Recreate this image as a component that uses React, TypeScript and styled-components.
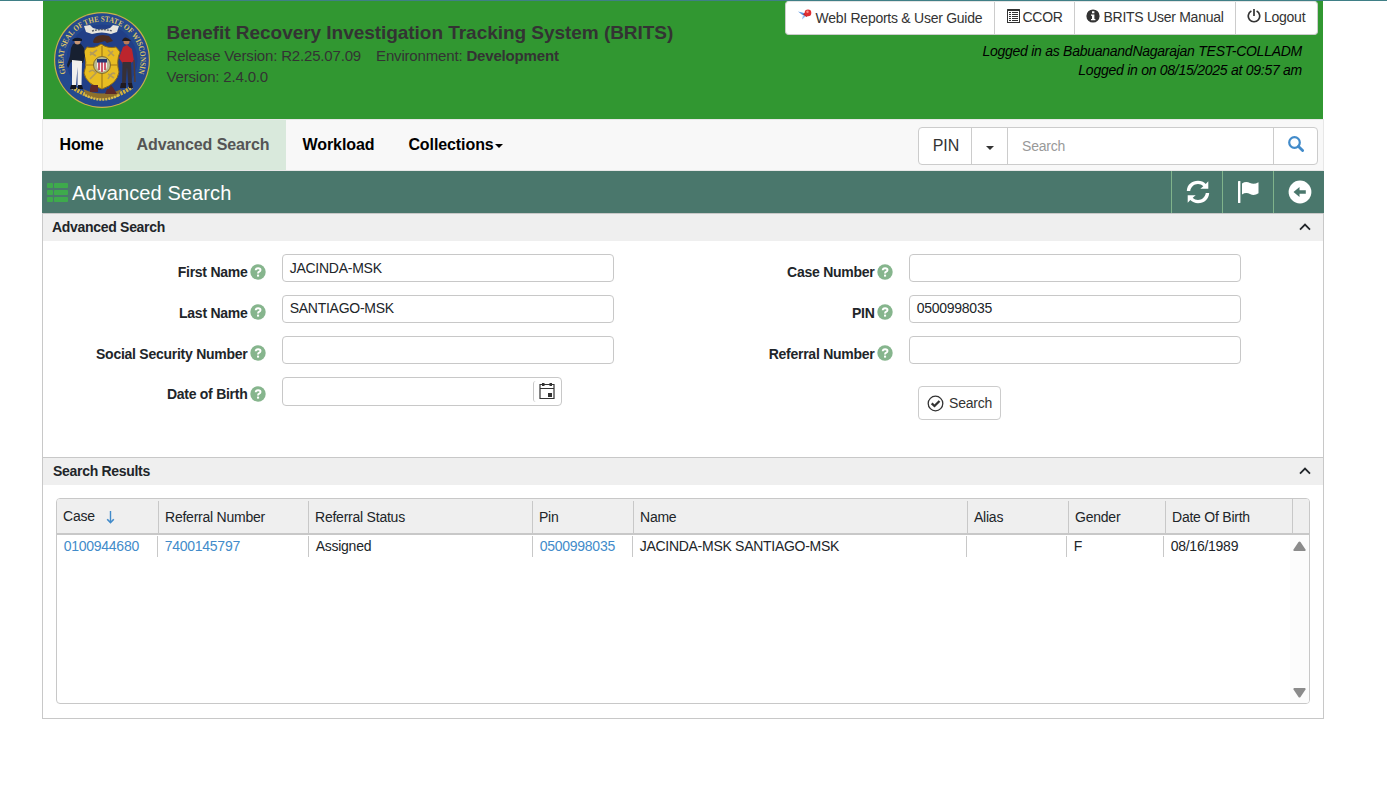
import React from 'react';
import styled, { createGlobalStyle } from 'styled-components';

const GlobalStyle = createGlobalStyle`
  * { box-sizing: border-box; }
  body {
    margin: 0;
    background: #fff;
    color: #212529;
    font-family: "Liberation Sans", Arial, sans-serif;
    font-size: 14px;
    line-height: 20px;
    letter-spacing: -0.26px;
  }
  svg { display: block; flex: none; }
`;

const Page = styled.div`
  height: 787px;
  border-top: 1px solid #3f7f86;
  overflow: hidden;
`;
const Container = styled.div`
  width: 1282px;
  margin-left: 42px;
`;
const Header = styled.header`
  display: flex;
  height: 118px;
  margin: 0 1px;
  background: #319731;
  color: #333;
`;
const SealBox = styled.div`
  padding: 10px 0 0 10px;
`;
const HeaderInfo = styled.div`
  padding: 20px 0 0 15.5px;
  font-size: 15px;
  line-height: 21px;
  letter-spacing: -0.17px;
  white-space: nowrap;
`;
const AppTitle = styled.h1`
  margin: 0;
  font-size: 19px;
  line-height: 24px;
  font-weight: bold;
  letter-spacing: -0.04px;
`;
const Version = styled.div`
  display: flex;
  gap: 15px;
`;
const HeaderSide = styled.div`
  display: flex;
  flex-direction: column;
  align-items: flex-end;
  margin-left: auto;
  padding-right: 5px;
`;
const LinkGroup = styled.nav`
  display: flex;
  height: 34px;
  background: #fff;
  border: 1px solid #ccc;
  border-top-color: #e4e4e4;
  border-radius: 4px;
  overflow: hidden;
`;
const TopLink = styled.a<{ $w: number; $gap?: number; $drop?: number; $pad?: number }>`
  display: flex;
  align-items: flex-start;
  width: ${p => p.$w}px;
  gap: ${p => p.$gap ?? 3}px;
  padding: ${p => 5 + (p.$drop ?? 0)}px 0 0 ${p => p.$pad ?? 12}px;
  white-space: nowrap;
  color: #333;
  & + & { border-left: 1px solid #ccc; }
  svg { margin-top: ${p => 2 - (p.$drop ?? 0)}px; }
`;
const LoginInfo = styled.div`
  padding: 7px 16px 0 0;
  color: #000;
  font-style: italic;
  line-height: 19px;
  text-align: right;
`;
const NavBar = styled.div`
  display: flex;
  height: 52px;
  background: #f8f8f8;
  border: 1px solid #e7e7e7;
`;
const NavItem = styled.a<{ $active?: boolean; $w: number }>`
  display: flex;
  justify-content: center;
  align-items: center;
  gap: 1px;
  width: ${p => p.$w}px;
  padding: 0 0 1px;
  font-size: 16px;
  font-weight: bold;
  letter-spacing: -0.09px;
  color: ${p => (p.$active ? '#555' : '#000')};
  background: ${p => (p.$active ? '#d9e9dc' : 'transparent')};
`;
const Caret = styled.span`
  margin-top: 3px;
  border: 4px solid transparent;
  border-top-color: currentColor;
  border-bottom: 0;
`;
const SearchGroup = styled.div`
  display: flex;
  width: 400px;
  height: 38px;
  margin: 7px 5px 0 auto;
  background: #fff;
  border: 1px solid #ccc;
  border-radius: 4px;
`;
const SearchCell = styled.div<{ $w: number }>`
  display: flex;
  align-items: center;
  justify-content: center;
  width: ${p => p.$w}px;
  border-right: 1px solid #ccc;
  font-size: 16px;
  letter-spacing: 0;
  color: #333;
  &:first-child { padding-left: 2px; }
  &:last-child { border-right: 0; padding-bottom: 5px; }
`;
const SearchInput = styled(SearchCell)`
  justify-content: flex-start;
  padding-left: 14px;
  font-size: 14px;
  letter-spacing: -0.2px;
  color: #999;
`;
const TitleBar = styled.div`
  display: flex;
  align-items: center;
  height: 42px;
  padding-left: 5px;
  background: #4a776c;
  color: #fff;
`;
const PageTitle = styled.h2`
  margin: 0 auto 0 4px;
  padding-top: 1px;
  font-size: 20px;
  line-height: 24px;
  letter-spacing: 0.1px;
  font-weight: normal;
`;
const ToolButton = styled.button`
  display: flex;
  align-items: center;
  justify-content: center;
  width: 51px;
  height: 42px;
  padding: 0 0 1px 1px;
  border: 0;
  border-left: 1px solid #80b38b;
  background: transparent;
  color: #fff;
`;
const Panel = styled.section<{ $h: number; $last?: boolean }>`
  height: ${p => p.$h}px;
  border: 1px solid #c8c8c8;
  border-bottom-width: ${p => (p.$last ? 1 : 0)}px;
`;
const PanelHeader = styled.div<{ $pad: number }>`
  display: flex;
  align-items: center;
  justify-content: space-between;
  height: 27px;
  padding: 0 12px 1px ${p => p.$pad}px;
  background: #efefef;
  color: #212529;
  font-weight: bold;
  letter-spacing: -0.3px;
`;
const FormGrid = styled.div`
  display: grid;
  grid-template-columns: 223px 348px 279px 348px;
  grid-auto-rows: 41px;
  padding-top: 13px;
`;
const Label = styled.label<{ $up?: number; $iconUp?: number }>`
  display: flex;
  justify-content: flex-end;
  align-items: center;
  gap: 2px;
  height: 20px;
  margin: ${p => 8 - (p.$up ?? 0)}px 0.5px 0 0;
  font-weight: bold;
  letter-spacing: -0.26px;
  white-space: nowrap;
  svg { margin-bottom: ${p => (p.$iconUp ?? 0) * 2}px; }
`;
const FieldCell = styled.div`
  padding-left: 16px;
`;
const Field = styled.div<{ $w?: number; $h?: number; $up?: number }>`
  display: flex;
  width: ${p => p.$w ?? 332}px;
  height: ${p => p.$h ?? 28}px;
  padding: ${p => 3 - (p.$up ?? 0)}px 0 0 6.7px;
  border: 1px solid #c8c8c8;
  border-radius: 4px;
`;
const PickerButton = styled.span`
  display: flex;
  align-items: center;
  justify-content: center;
  width: 28px;
  height: 21px;
  margin-left: auto;
  padding: 0 2px 2px 0;
  border-left: 1px solid #c8c8c8;
  border-radius: 3px;
`;
const SubmitButton = styled.button`
  display: flex;
  align-items: center;
  gap: 5px;
  width: 83px;
  height: 34px;
  margin: 9px 0 0 25px;
  padding: 0 0 0 8px;
  border: 1px solid #ccc;
  border-radius: 4px;
  background: #fff;
  color: #333;
  font: inherit;
  letter-spacing: -0.2px;
`;
const Grid = styled.div`
  width: 1254px;
  height: 206px;
  margin: 13px 0 0 13px;
  border: 1px solid #c8c8c8;
  border-radius: 4px;
  overflow: hidden;
`;
const GridHead = styled.div`
  display: flex;
  height: 36px;
  background: #efefef;
  border-bottom: 2px solid #c8c8c8;
`;
const HeadCell = styled.div<{ $w: number; $first?: boolean }>`
  display: flex;
  align-items: flex-start;
  width: ${p => p.$w}px;
  height: 32px;
  margin-top: 2px;
  padding: ${p => (p.$first ? 5 : 6)}px 0 0 6px;
  border-right: 1px solid #c8c8c8;
  gap: 11px;
  letter-spacing: -0.23px;
  &:nth-child(8) { height: 34px; margin-top: 0; padding-top: 8px; }
  svg { margin-top: 5px; }
`;
const GridBody = styled.div`
  display: flex;
  height: 168px;
`;
const BodyRow = styled.div`
  display: flex;
  width: 1233px;
`;
const BodyCell = styled.div<{ $w: number; $link?: boolean }>`
  width: ${p => p.$w}px;
  height: 21px;
  margin-top: 1px;
  padding-left: 6.7px;
  border-right: 1px solid #c8c8c8;
  color: ${p => (p.$link ? '#428bca' : '#212529')};
  white-space: nowrap;
  &:nth-child(5) { letter-spacing: -0.28px; }
  &:last-child { border-right: 0; }
`;
const ScrollTrack = styled.div`
  display: flex;
  flex-direction: column;
  justify-content: space-between;
  align-items: center;
  width: 19px;
  padding: 6px 0 5px;
  background: #fcfcfc;
`;

const Seal = () => (
  <svg width="98" height="98" viewBox="0 0 98 98">
    <circle cx="49" cy="49" r="48" fill="#c9b04a" />
    <circle cx="49" cy="49" r="46.8" fill="#24498f" />
    <circle cx="49" cy="49" r="35.500" fill="#213f87" />
    <defs><path id="rim" d="M12.8 62.500A38.6 38.6 0 1 1 85.2 62.500" /></defs>
    <text fill="#dcc468" fontFamily="Liberation Serif, serif" fontWeight="bold" fontSize="8" letterSpacing="0">
      <textPath href="#rim" textLength="148" lengthAdjust="spacingAndGlyphs">GREAT SEAL OF THE STATE OF WISCONSIN</textPath>
    </text>
    <path d="M19 76Q49 97 79 76" fill="none" stroke="#d4b13c" strokeWidth="4" strokeDasharray="2.2 1" />
    <path d="M30 78Q49 87 69 78L64 85Q49 92 34 85Z" fill="#8d6f2c" />
    <path d="M31 15L37 14L40 17Q49 20 57 17L60 14L66 15L64 21L58 23Q49 20 39 23L33 21Z" fill="#e7e5dd" />
    <path d="M39 20Q49 17 59 20" fill="none" stroke="#59616e" strokeWidth="1.4" strokeDasharray="2 1" />
    <path d="M40 31Q41 24 50 24L56 25L60 30L54 32L52 30L45 32L41 32Z" fill="#4b2c21" />
    <path d="M34 36Q42 38 48 33Q55 38 63 36L67 41Q63 50 66 61Q64 73 49 78Q33 73 31 62Q35 50 30 42Z" fill="#e8bd22" stroke="#8c6817" />
    <path d="M49 35V45M49 62V77M32 54H41M57 54H65" stroke="#a37b18" strokeWidth="1.2" />
    <path d="M37 44L44 39M55 39L61 45M37 68L44 61M55 63L61 67M36 61Q40 57 43 62M55 68Q59 60 62 63M37 41L43 45M55 45L60 40" stroke="#b39b58" strokeWidth="1.600" fill="none" />
    <circle cx="49" cy="54" r="8.5" fill="#b9b98f" stroke="#826c28" />
    <path d="M44 48H54V56Q53 60 49 61Q45 60 44 56Z" fill="#f4eef0" />
    <path d="M46 51V59M49 51V61M52 51V59" stroke="#bc2940" strokeWidth="1.5" />
    <path d="M44 48H54V51.500H44Z" fill="#263772" />
    <g transform="translate(1 -1)">
      <path d="M19 34Q24 32 27 34L30 38L31 46L29 53L17 52L14 58L13 55L16 46L17 38Z" fill="#172031" />
      <circle cx="23.500" cy="31.500" r="3" fill="#c89674" />
      <path d="M18 30Q22 26 28 29V31H19Z" fill="#11192b" />
      <path d="M18 50L28 51L27.500 76L23.500 76L23.500 57L22 76H18Z" fill="#f1efec" />
      <path d="M17 75H22V79H16ZM24 75H28L29 79H24Z" fill="#11131c" />
    </g>
    <g transform="translate(2 -1)">
      <path d="M68 37L72 35L77 39L79 51L74 54H68L64 48Z" fill="#bc252d" />
      <circle cx="71.500" cy="31.500" r="3" fill="#bd7a55" />
      <path d="M67 31Q69 25 74 29L76 31Z" fill="#251b1c" />
      <path d="M67.500 52H76L77 75H73.500L72 57L70.500 75H67Z" fill="#373037" />
      <path d="M66 73H71V78H65ZM73 73H77L78 78H74Z" fill="#201b21" />
      <path d="M79 50L80 72" stroke="#563d31" strokeWidth="1.500" />
    </g>
    <path d="M37 78L38 74H45V81H37M52 83L54 78H56L58 74L61 78L64 83Z" fill="#5c282b" />
    <path d="M32 84Q49 93 66 84" fill="none" stroke="#d9bd4c" strokeWidth="2.500" strokeDasharray="2 1" />
  </svg>
);

const PinIcon = () => (
  <svg width="14" height="14" viewBox="0 0 14 14">
    <path d="M0 2.500L6 4L8 7L4.500 6Z" fill="#5d98e3" />
    <path d="M5 6.500L8.500 6.500L4 10.500Z" fill="#8fbcf2" />
    <path d="M5 5.500L8 2.500L11.500 5.500L8.500 8Z" fill="#b92730" />
    <circle cx="10" cy="3.900" r="3.3" fill="#df2e32" />
    <circle cx="9.5" cy="2.800" r="1.2" fill="#f78f8a" />
  </svg>
);
const ListAltIcon = () => (
  <svg width="14" height="14" viewBox="0 0 14 14" fill="#333">
    <path fillRule="evenodd" d="M.5 0h12q.5 0 .5.5v13q0 .5-.5.5H.5Q0 14 0 13.5V.5Q0 0 .5 0ZM1 2V13h11V2Z" />
    <path d="M2 3h2v1H2zM5 3h6v1H5zM2 5h2v1H2zM5 5h6v1H5zM2 7h2v1H2zM5 7h6v1H5zM2 9h2v1H2zM5 9h6v1H5zM2 11h2v1H2zM5 11h6v1H5z" />
  </svg>
);
const InfoIcon = () => (
  <svg width="14" height="14" viewBox="0 0 14 14">
    <circle cx="7" cy="7" r="6.6" fill="#333" />
    <path d="M6 2.2h2.4v2H6zM5 5.5h3.4v4.4h1v1.3H5V9.9h1V6.8H5z" fill="#fff" />
  </svg>
);
const PowerIcon = () => (
  <svg width="14" height="14" viewBox="0 0 14 14" fill="none" stroke="#333" strokeWidth="1.7">
    <path d="M4.4 2A5.7 5.7 0 1 0 9.6 2M7 0V7" />
  </svg>
);
const SearchIcon = () => (
  <svg width="16" height="16" viewBox="0 0 16 16" fill="none" stroke="#428bca">
    <circle cx="6.5" cy="6.5" r="5.3" strokeWidth="2.2" />
    <path d="M10.5 10.5L14.600 14.600" strokeWidth="2.8" strokeLinecap="round" />
  </svg>
);
const ThListIcon = () => (
  <svg width="21" height="19" viewBox="0 0 21 19" fill="#3eaa4c">
    <rect width="6" height="5" rx=".8" /><rect x="7" width="14" height="5" rx=".8" />
    <rect y="7" width="6" height="5" rx=".8" /><rect x="7" y="7" width="14" height="5" rx=".8" />
    <rect y="14" width="6" height="5" rx=".8" /><rect x="7" y="14" width="14" height="5" rx=".8" />
  </svg>
);
const RefreshIcon = () => (
  <svg width="24" height="24" viewBox="0 0 24 24" fill="#fff">
    <path d="M.8 11C1.200 4.500 6 .8 12 .8C15 .8 17.800 2 19.700 3.900L22.300 1.300V8.800H14.300L17.300 6.200C15.800 4.800 14 4 12 4C8 4 4.900 6.800 4.200 11Z" />
    <path d="M23.200 13C22.800 19.500 18 23.200 12 23.200C9 23.200 6.200 22 4.300 20.100L1.700 22.700V15.200H9.700L6.700 17.800C8.200 19.200 10 20 12 20C16 20 19.100 17.200 19.800 13Z" />
  </svg>
);
const FlagIcon = () => (
  <svg width="21" height="22" viewBox="0 0 21 22" fill="#fff">
    <rect x="0" y="0" width="2.400" height="22" rx=".6" />
    <path d="M4 2.500Q8 0 12 2Q16 3.800 20.500 1.200V12.300Q16 15.500 12 13Q8 11 4 13.500Z" />
  </svg>
);
const BackIcon = () => (
  <svg width="24" height="24" viewBox="0 0 24 24">
    <circle cx="12" cy="12" r="11.400" fill="#fff" />
    <path d="M5.500 12L11.500 7V10.200H17.800V13.800H11.500V17Z" fill="#4a776c" />
  </svg>
);
const ChevronUp = () => (
  <svg width="12" height="8" viewBox="0 0 12 8" fill="none" stroke="#212529" strokeWidth="1.800">
    <path d="M1 6.600L6 1.600L11 6.600" />
  </svg>
);
const HelpIcon = () => (
  <svg width="16" height="16" viewBox="0 0 16 16">
    <circle cx="8" cy="8" r="7.700" fill="#86b58d" />
    <path d="M5.700 6.200Q5.800 4.200 8.100 4.200Q10.500 4.200 10.500 6Q10.500 7 9.200 7.700Q8 8.300 8 9.500" fill="none" stroke="#fff" strokeWidth="1.900" />
    <rect x="7" y="10.600" width="2.100" height="2" fill="#fff" />
  </svg>
);
const CalendarIcon = () => (
  <svg width="16" height="18" viewBox="0 0 16 18">
    <path d="M1 2.500H15V16.500H1ZM1 6.500H15" fill="none" stroke="#333" strokeWidth="1.200" />
    <path d="M3 1H5.500V4H3ZM10.500 1H13V4H10.500ZM9 11H13V15H9Z" fill="#333" />
  </svg>
);
const CheckCircle = () => (
  <svg width="17" height="17" viewBox="0 0 17 17" fill="none" stroke="#333">
    <circle cx="8.500" cy="8.500" r="7.300" strokeWidth="1.300" />
    <path d="M4.700 8.300L7.500 11L12.500 6" strokeWidth="2.300" />
  </svg>
);
const SortArrow = () => (
  <svg width="9" height="13" viewBox="0 0 9 13" fill="none" stroke="#428bca">
    <path d="M4.500 0V11" strokeWidth="1.400" />
    <path d="M1.200 8.200L4.500 11.500L7.800 8.200" strokeWidth="1.600" />
  </svg>
);
const ScrollArrow = ({ down }: { down?: boolean }) => (
  <svg width="13" height="10" viewBox="0 0 13 10" fill="#8b8b8b">
    <path d={down ? 'M1 0H12Q13 .5 12.500 1.500L7.500 9Q6.500 10 5.500 9L.5 1.500Q0 .5 1 0Z' : 'M1 10H12Q13 9.500 12.500 8.500L7.500 1Q6.500 0 5.500 1L.5 8.500Q0 9.500 1 10Z'} />
  </svg>
);

const headers: [string, number][] = [
  ['Case', 102], ['Referral Number', 150], ['Referral Status', 224], ['Pin', 101],
  ['Name', 334], ['Alias', 101], ['Gender', 97], ['Date Of Birth', 127],
];
const cells: [string, number, boolean?][] = [
  ['0100944680', 101, true], ['7400145797', 151, true], ['Assigned', 224], ['0500998035', 100, true],
  ['JACINDA-MSK SANTIAGO-MSK', 334], ['', 100], ['F', 97], ['08/16/1989', 126],
];

export default function App() {
  return (
    <Page>
      <GlobalStyle />
      <Container>
        <Header>
          <SealBox><Seal /></SealBox>
          <HeaderInfo>
            <AppTitle>Benefit Recovery Investigation Tracking System (BRITS)</AppTitle>
            <Version>
              <span>Release Version: R2.25.07.09</span>
              <span>Environment: <b>Development</b></span>
            </Version>
            <div>Version: 2.4.0.0</div>
          </HeaderInfo>
          <HeaderSide>
            <LinkGroup>
              <TopLink $w={208} $drop={1} $gap={3.5}><PinIcon />WebI Reports &amp; User Guide</TopLink>
              <TopLink $w={80} $gap={1.5}><ListAltIcon />CCOR</TopLink>
              <TopLink $w={161} $pad={11} $gap={3.5}><InfoIcon />BRITS User Manual</TopLink>
              <TopLink $w={82} $pad={11}><PowerIcon />Logout</TopLink>
            </LinkGroup>
            <LoginInfo>
              <div>Logged in as BabuanandNagarajan TEST-COLLADM</div>
              <div>Logged in on 08/15/2025 at 09:57 am</div>
            </LoginInfo>
          </HeaderSide>
        </Header>
        <NavBar>
          <NavItem $w={77}>Home</NavItem>
          <NavItem $w={166} $active>Advanced Search</NavItem>
          <NavItem $w={105}>Workload</NavItem>
          <NavItem $w={129}>Collections<Caret /></NavItem>
          <SearchGroup>
            <SearchCell $w={53}>PIN</SearchCell>
            <SearchCell $w={36}><Caret /></SearchCell>
            <SearchInput $w={266}>Search</SearchInput>
            <SearchCell $w={43}><SearchIcon /></SearchCell>
          </SearchGroup>
        </NavBar>
        <TitleBar>
          <ThListIcon />
          <PageTitle>Advanced Search</PageTitle>
          <ToolButton><RefreshIcon /></ToolButton>
          <ToolButton><FlagIcon /></ToolButton>
          <ToolButton><BackIcon /></ToolButton>
        </TitleBar>
        <Panel $h={244}>
          <PanelHeader $pad={9}>Advanced Search<ChevronUp /></PanelHeader>
          <FormGrid>
            <Label>First Name<HelpIcon /></Label>
            <FieldCell><Field>JACINDA-MSK</Field></FieldCell>
            <Label>Case Number<HelpIcon /></Label>
            <FieldCell><Field /></FieldCell>
            <Label $iconUp={1}>Last Name<HelpIcon /></Label>
            <FieldCell><Field $up={1}>SANTIAGO-MSK</Field></FieldCell>
            <Label $iconUp={1}>PIN<HelpIcon /></Label>
            <FieldCell><Field $up={1}>0500998035</Field></FieldCell>
            <Label $iconUp={1}>Social Security Number<HelpIcon /></Label>
            <FieldCell><Field /></FieldCell>
            <Label $iconUp={1}>Referral Number<HelpIcon /></Label>
            <FieldCell><Field /></FieldCell>
            <Label $up={1}>Date of Birth<HelpIcon /></Label>
            <FieldCell><Field $w={280} $h={29}><PickerButton><CalendarIcon /></PickerButton></Field></FieldCell>
            <span />
            <SubmitButton><CheckCircle />Search</SubmitButton>
          </FormGrid>
        </Panel>
        <Panel $h={262} $last>
          <PanelHeader $pad={10}>Search Results<ChevronUp /></PanelHeader>
          <Grid>
            <GridHead>
              {headers.map(([name, w], i) => (
                <HeadCell key={name} $w={w} $first={i === 0}>{name}{i === 0 && <SortArrow />}</HeadCell>
              ))}
            </GridHead>
            <GridBody>
              <BodyRow>
                {cells.map(([value, w, link], i) => <BodyCell key={i} $w={w} $link={link}>{value}</BodyCell>)}
              </BodyRow>
              <ScrollTrack><ScrollArrow /><ScrollArrow down /></ScrollTrack>
            </GridBody>
          </Grid>
        </Panel>
      </Container>
    </Page>
  );
}
